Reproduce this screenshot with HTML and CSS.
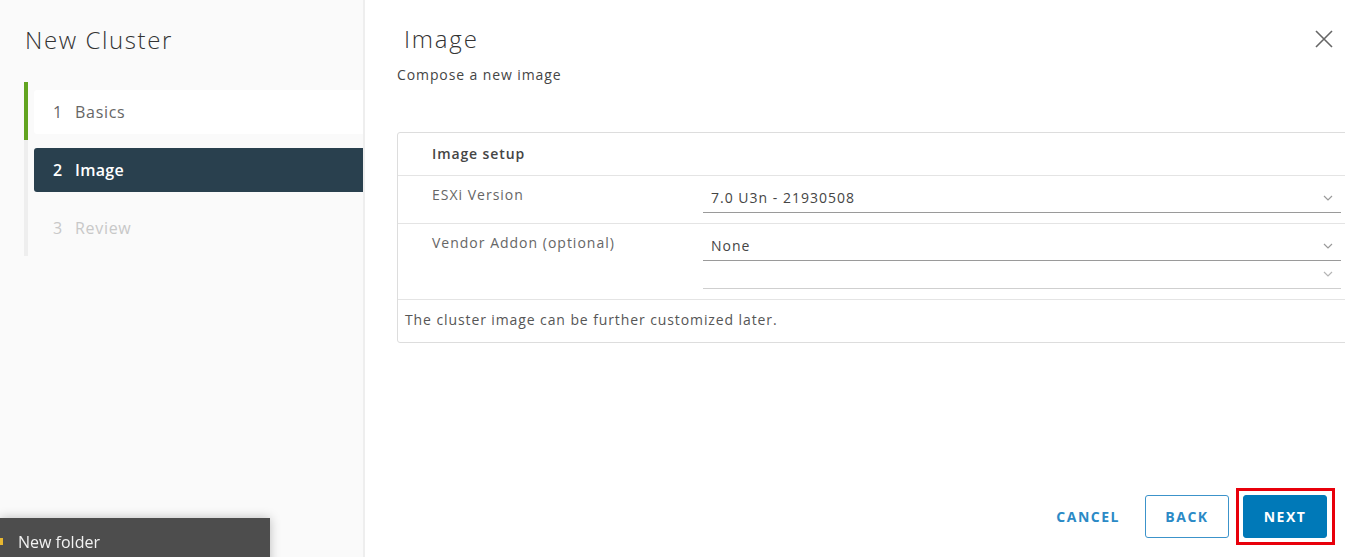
FILE: index.html
```html
<!DOCTYPE html>
<html lang="en">
<head>
    <meta charset="UTF-8">
    <meta name="viewport" content="width=device-width, initial-scale=1.0">
    <title>New Cluster</title>
    <link rel="stylesheet" href="styles.css">
</head>
<body>
    <div class="wizard">
        <aside class="sidebar">
            <h1 class="wizard-title">New Cluster</h1>
            <ol class="steps">
                <li class="step done"><div class="step-box"><span class="num">1</span>Basics</div></li>
                <li class="step active"><div class="step-box"><span class="num">2</span>Image</div></li>
                <li class="step"><div class="step-box"><span class="num">3</span>Review</div></li>
            </ol>
        </aside>

        <main class="content">
            <header class="content-header">
                <h2>Image</h2>
                <button class="close" aria-label="Close">
                    <svg width="18" height="18" viewBox="0 0 18 18"><path d="M1 1 L17 17 M17 1 L1 17" stroke="#666" stroke-width="1.6" fill="none"/></svg>
                </button>
            </header>
            <p class="subtitle">Compose a new image</p>

            <section class="card">
                <div class="card-head">Image setup</div>
                <div class="card-row">
                    <div class="label">ESXi Version</div>
                    <div class="fields">
                        <div class="select">
                            <span>7.0 U3n - 21930508</span>
                            <svg class="chevron" width="10" height="6" viewBox="0 0 10 6"><polyline points="1,1 5,5 9,1" stroke="#9a9a9a" stroke-width="1.2" fill="none"/></svg>
                        </div>
                    </div>
                </div>
                <div class="card-row">
                    <div class="label">Vendor Addon (optional)</div>
                    <div class="fields">
                        <div class="select">
                            <span>None</span>
                            <svg class="chevron" width="10" height="6" viewBox="0 0 10 6"><polyline points="1,1 5,5 9,1" stroke="#9a9a9a" stroke-width="1.2" fill="none"/></svg>
                        </div>
                        <div class="select disabled">
                            <span></span>
                            <svg class="chevron" width="10" height="6" viewBox="0 0 10 6"><polyline points="1,1 5,5 9,1" stroke="#b5b5b5" stroke-width="1.2" fill="none"/></svg>
                        </div>
                    </div>
                </div>
                <div class="card-foot">The cluster image can be further customized later.</div>
            </section>

            <footer class="actions">
                <button class="btn btn-link">Cancel</button>
                <button class="btn btn-outline">Back</button>
                <span class="highlight"><button class="btn btn-primary">Next</button></span>
            </footer>
        </main>
    </div>

    <div class="os-tooltip">
        <span class="folder-icon"></span>
        New folder
    </div>
</body>
</html>
```

FILE: styles.css
```css
body {
    margin: 0;
    font-family: "Open Sans", Arial, sans-serif;
    color: #565656;
    background: #fff;
    height: 100vh;
    overflow: hidden;
}

.wizard {
    display: flex;
    height: 100vh;
}

/* left column */
.sidebar {
    width: 363px;
    flex: none;
    background: #fafafa;
    border-right: 2px solid #eeeeee;
}

.wizard-title {
    margin: 24px 0 26px 25px;
    font-size: 24px;
    line-height: 32px;
    font-weight: 300;
    letter-spacing: 1.6px;
    color: #333;
}

.steps {
    list-style: none;
    margin: 0 0 0 24px;
    padding: 0;
}

.step {
    border-left: 4px solid #eeeeee;
    padding: 8px 0 6px 6px;
}

.step.done {
    border-left-color: #62a420;
}

.step-box {
    height: 44px;
    display: flex;
    align-items: center;
    padding-left: 19px;
    font-size: 16px;
    letter-spacing: 0.7px;
    color: #c8c8c8;
    border-radius: 3px 0 0 3px;
}

.step .num {
    width: 22px;
    letter-spacing: 0;
}

.step.done .step-box {
    background: #fff;
    color: #666;
}

.step.active .step-box {
    background: #29404e;
    color: #fff;
    font-weight: 600;
    letter-spacing: 0.3px;
}

/* right column */
.content {
    flex: 1;
    min-width: 0;
    display: flex;
    flex-direction: column;
    padding-left: 32px;
    overflow: hidden;
}

.content-header {
    display: flex;
    align-items: center;
    justify-content: space-between;
    margin-top: 23px;
}

.content-header h2 {
    margin: 0;
    padding-left: 7px;
    font-size: 24px;
    line-height: 32px;
    font-weight: 300;
    letter-spacing: 1.8px;
    color: #333;
}

.close {
    border: none;
    background: none;
    padding: 0;
    margin-right: 12px;
    width: 18px;
    height: 18px;
    cursor: pointer;
}

.subtitle {
    margin: 10px 0 0;
    font-size: 14px;
    line-height: 20px;
    letter-spacing: 0.9px;
    color: #454545;
}

.card {
    margin-top: 47px;
    width: 965px;
    flex: none;
    border: 1px solid #dddddd;
    border-radius: 3px;
    font-size: 14px;
    letter-spacing: 0.9px;
}

.card-head {
    height: 42px;
    line-height: 42px;
    padding-left: 34px;
    font-weight: 600;
    color: #454545;
    border-bottom: 1px solid #e4e4e4;
}

.card-row {
    display: grid;
    grid-template-columns: 305px 638px;
    border-bottom: 1px solid #e4e4e4;
}

.label {
    padding: 9px 0 0 34px;
    line-height: 20px;
    letter-spacing: 1px;
    color: #666;
}

.fields {
    display: flex;
    flex-direction: column;
    gap: 2px;
    padding: 11px 0 10px;
}

.select {
    height: 26px;
    box-sizing: border-box;
    display: flex;
    align-items: center;
    justify-content: space-between;
    padding: 0 8px 4px 8px;
    border-bottom: 1px solid #9a9a9a;
    letter-spacing: 1px;
    color: #454545;
}

.select.disabled {
    border-bottom-color: #cfcfcf;
}

.card-foot {
    padding: 10px 0 12px 7px;
    line-height: 20px;
    color: #565656;
}

/* bottom buttons */
.actions {
    margin-top: auto;
    display: flex;
    justify-content: flex-end;
    align-items: center;
    gap: 14px;
    padding: 0 18px 19px 0;
}

.btn {
    height: 43px;
    min-width: 84px;
    box-sizing: border-box;
    padding: 0 19px;
    font-family: "Open Sans", Arial, sans-serif;
    font-size: 14px;
    font-weight: 700;
    letter-spacing: 1.5px;
    text-transform: uppercase;
    border-radius: 3px;
    cursor: pointer;
}

.btn-link {
    background: none;
    border: none;
    color: #2b8ac6;
    padding: 0 11px 0 24px;
}

.btn-outline {
    background: #fff;
    border: 1px solid #3c93ca;
    color: #2b8ac6;
}

.btn-primary {
    background: #0079b8;
    border: 1px solid #0079b8;
    color: #fff;
}

.highlight {
    position: relative;
    display: inline-flex;
}

.highlight::after {
    content: "";
    position: absolute;
    top: -7px;
    bottom: -7px;
    left: -7px;
    right: -8px;
    border: 3px solid #e8000b;
    pointer-events: none;
}

/* windows tooltip overlapping the page */
.os-tooltip {
    position: fixed;
    left: 0;
    top: 518px;
    width: 252px;
    height: 39px;
    padding: 12px 0 0 18px;
    background: #4d4d4d;
    color: #f2f2f2;
    font-size: 16px;
    line-height: 24px;
    box-shadow: 0 0 10px rgba(0,0,0,0.25);
}

.folder-icon {
    position: absolute;
    left: 0;
    top: 20px;
    width: 3px;
    height: 7px;
    background: #e8b730;
}
```
